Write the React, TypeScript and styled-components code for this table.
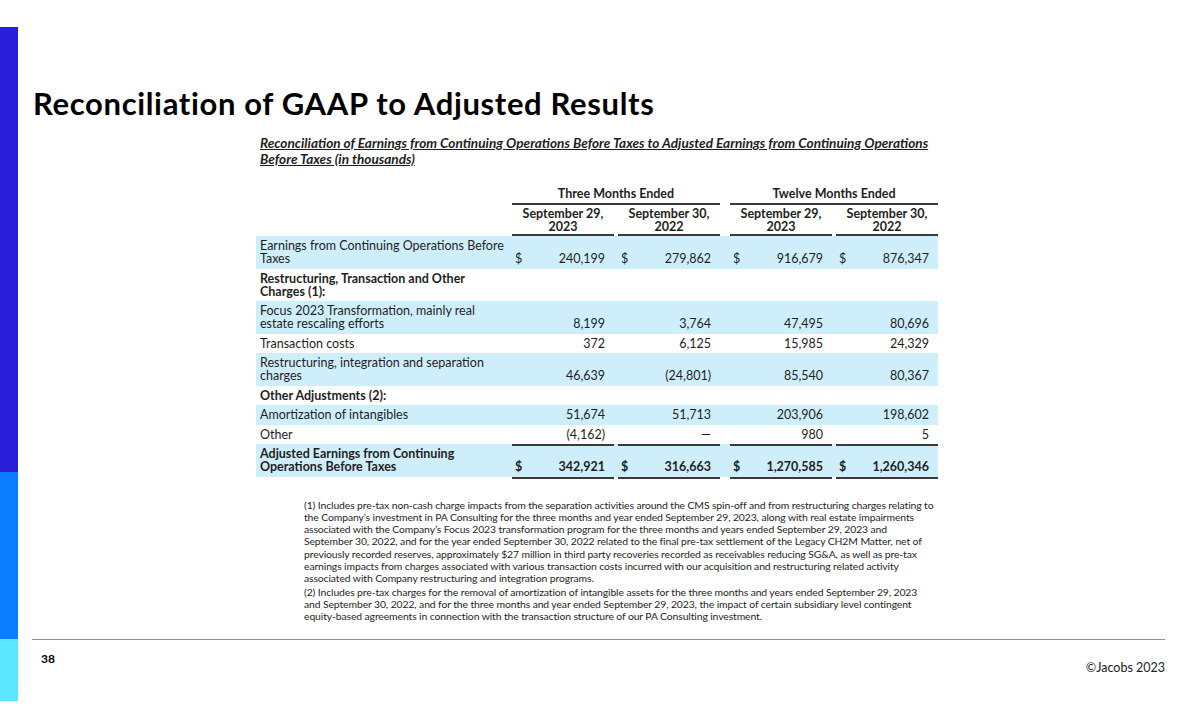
import React from "react";
import styled, { createGlobalStyle } from "styled-components";

const GlobalStyle = createGlobalStyle`
  html, body { margin: 0; padding: 0; background: #ffffff; }
  body { font-family: "Lato", "Liberation Sans", sans-serif; color: #111; }
`;

const Slide = styled.div`
  width: 1200px;
  height: 728px;
  display: grid;
  grid-template-columns: 18px 1fr;
  background: #ffffff;
  overflow: hidden;
`;

const SideBar = styled.div`
  padding-top: 27px;
  display: flex;
  flex-direction: column;
`;

const BarSegment = styled.div<{ $h: number; $c: string }>`
  height: ${(p) => p.$h}px;
  background: ${(p) => p.$c};
`;

const Main = styled.div`
  display: flex;
  flex-direction: column;
  padding: 0 35px 0 14px;
`;

const Title = styled.h1`
  margin: 85px 0 0 1px;
  font-family: "Lato", sans-serif;
  font-weight: 700;
  font-size: 31px;
  line-height: 36px;
  color: #000;
  letter-spacing: 0.65px;
`;

const Report = styled.div`
  margin: 15px 0 0 224px;
  width: 682px;
  font-family: "Lato", sans-serif;
  font-size: 12.5px;
  color: #1e1e1e;
`;

const ReportHeading = styled.div`
  padding-left: 4px;
  font-size: 13.6px;
  font-weight: 700;
  font-style: italic;
  text-decoration: underline;
  line-height: 15.5px;
  white-space: nowrap;
`;

const HeaderArea = styled.div`
  margin-top: 19px;
  display: flex;
  padding-left: 256px;
  gap: 10px;
`;

const Group = styled.div`
  display: flex;
  flex-direction: column;
  width: 208px;
`;

const GroupTitle = styled.div`
  text-align: center;
  font-weight: 700;
  line-height: 15px;
  padding-bottom: 2px;
  border-bottom: 2px solid #3a3a3a;
`;

const GroupCols = styled.div`
  display: flex;
  gap: 4px;
  margin-top: 2px;
`;

const ColHead = styled.div`
  width: 102px;
  text-align: center;
  font-weight: 700;
  line-height: 13px;
  padding-bottom: 1px;
  border-bottom: 2px solid #3a3a3a;
`;

const Row = styled.div<{ $shade?: boolean }>`
  display: flex;
  background: ${(p) => (p.$shade ? "#cfeefc" : "transparent")};
`;

const Label = styled.div<{ $bold?: boolean }>`
  width: 252px;
  padding: 3px 0 3.5px 4px;
  line-height: 13px;
  font-weight: ${(p) => (p.$bold ? 700 : 400)};
`;

const Values = styled.div`
  display: flex;
  gap: 10px;
`;

const ValueGroup = styled.div`
  display: flex;
  gap: 4px;
`;

const Cell = styled.div<{ $rule?: boolean; $bold?: boolean }>`
  width: 102px;
  box-sizing: border-box;
  display: flex;
  align-items: flex-end;
  justify-content: space-between;
  padding: 0 9px 3.5px 3px;
  line-height: 13px;
  font-weight: ${(p) => (p.$bold ? 700 : 400)};
  border-bottom: ${(p) => (p.$rule ? "2px solid #3a3a3a" : "2px solid transparent")};
  margin-bottom: -2px;
`;

const Amount = styled.span`
  margin-left: auto;
`;

const Notes = styled.div`
  margin: 22px 0 0 272px;
  font-family: "Lato", sans-serif;
  font-size: 10.4px;
  line-height: 12.3px;
  color: #1e1e1e;
  letter-spacing: -0.11px;
  white-space: nowrap;
`;

const Note = styled.p`
  margin: 0 0 1px 0;
`;

const FooterRule = styled.div`
  margin-top: auto;
  height: 1px;
  background: #8c86da;
`;

const Footer = styled.div`
  display: flex;
  justify-content: space-between;
  align-items: flex-start;
  height: 88px;
  padding-left: 9px;
  padding-top: 11px;
  box-sizing: border-box;
`;

const PageNum = styled.span`
  font-family: "Lato", sans-serif;
  font-weight: 700;
  font-size: 12px;
  color: #000;
`;

const Copyright = styled.span`
  margin-top: 9px;
  font-family: "Lato", sans-serif;
  font-size: 12.5px;
  color: #222;
`;

type Line = {
  label: React.ReactNode;
  shade?: boolean;
  bold?: boolean;
  values?: string[];
  dollar?: boolean;
  rule?: boolean;
};

const lines: Line[] = [
  {
    label: (
      <>
        Earnings from Continuing Operations Before
        <br />
        Taxes
      </>
    ),
    shade: true,
    values: ["240,199", "279,862", "916,679", "876,347"],
    dollar: true,
  },
  {
    label: (
      <>
        Restructuring, Transaction and Other
        <br />
        Charges (1):
      </>
    ),
    bold: true,
  },
  {
    label: (
      <>
        Focus 2023 Transformation, mainly real
        <br />
        estate rescaling efforts
      </>
    ),
    shade: true,
    values: ["8,199", "3,764", "47,495", "80,696"],
  },
  { label: "Transaction costs", values: ["372", "6,125", "15,985", "24,329"] },
  {
    label: (
      <>
        Restructuring, integration and separation
        <br />
        charges
      </>
    ),
    shade: true,
    values: ["46,639", "(24,801)", "85,540", "80,367"],
  },
  { label: "Other Adjustments (2):", bold: true },
  {
    label: "Amortization of intangibles",
    shade: true,
    values: ["51,674", "51,713", "203,906", "198,602"],
  },
  { label: "Other", values: ["(4,162)", "—", "980", "5"], rule: true },
  {
    label: (
      <>
        Adjusted Earnings from Continuing
        <br />
        Operations Before Taxes
      </>
    ),
    shade: true,
    bold: true,
    values: ["342,921", "316,663", "1,270,585", "1,260,346"],
    dollar: true,
    rule: true,
  },
];

function renderCell(line: Line, i: number) {
  const v = line.values ? line.values[i] : "";
  return (
    <Cell key={i} $rule={line.rule} $bold={line.bold}>
      {line.dollar ? <span>$</span> : null}
      <Amount>{v}</Amount>
    </Cell>
  );
}

export default function App() {
  return (
    <>
      <GlobalStyle />
      <Slide>
        <SideBar>
          <BarSegment $h={445} $c="#2a1fd8" />
          <BarSegment $h={167} $c="#0d7dff" />
          <BarSegment $h={62} $c="#5ce6ff" />
        </SideBar>
        <Main>
          <Title>Reconciliation of GAAP to Adjusted Results</Title>
          <Report>
            <ReportHeading>
              Reconciliation of Earnings from Continuing Operations Before Taxes to Adjusted Earnings from Continuing Operations
              <br />
              Before Taxes (in thousands)
            </ReportHeading>
            <HeaderArea>
              {["Three Months Ended", "Twelve Months Ended"].map((g) => (
                <Group key={g}>
                  <GroupTitle>{g}</GroupTitle>
                  <GroupCols>
                    <ColHead>
                      September 29,
                      <br />
                      2023
                    </ColHead>
                    <ColHead>
                      September 30,
                      <br />
                      2022
                    </ColHead>
                  </GroupCols>
                </Group>
              ))}
            </HeaderArea>
            {lines.map((line, idx) => (
              <Row key={idx} $shade={line.shade}>
                <Label $bold={line.bold}>{line.label}</Label>
                <Values>
                  <ValueGroup>
                    {renderCell(line, 0)}
                    {renderCell(line, 1)}
                  </ValueGroup>
                  <ValueGroup>
                    {renderCell(line, 2)}
                    {renderCell(line, 3)}
                  </ValueGroup>
                </Values>
              </Row>
            ))}
          </Report>
          <Notes>
            <Note>
              (1) Includes pre-tax non-cash charge impacts from the separation activities around the CMS spin-off and from restructuring charges relating to
              <br />
              the Company’s investment in PA Consulting for the three months and year ended September 29, 2023, along with real estate impairments
              <br />
              associated with the Company’s Focus 2023 transformation program for the three months and years ended September 29, 2023 and
              <br />
              September 30, 2022, and for the year ended September 30, 2022 related to the final pre-tax settlement of the Legacy CH2M Matter, net of
              <br />
              previously recorded reserves, approximately $27 million in third party recoveries recorded as receivables reducing SG&amp;A, as well as pre-tax
              <br />
              earnings impacts from charges associated with various transaction costs incurred with our acquisition and restructuring related activity
              <br />
              associated with Company restructuring and integration programs.
            </Note>
            <Note>
              (2) Includes pre-tax charges for the removal of amortization of intangible assets for the three months and years ended September 29, 2023
              <br />
              and September 30, 2022, and for the three months and year ended September 29, 2023, the impact of certain subsidiary level contingent
              <br />
              equity-based agreements in connection with the transaction structure of our PA Consulting investment.
            </Note>
          </Notes>
          <FooterRule />
          <Footer>
            <PageNum>38</PageNum>
            <Copyright>©Jacobs 2023</Copyright>
          </Footer>
        </Main>
      </Slide>
    </>
  );
}
